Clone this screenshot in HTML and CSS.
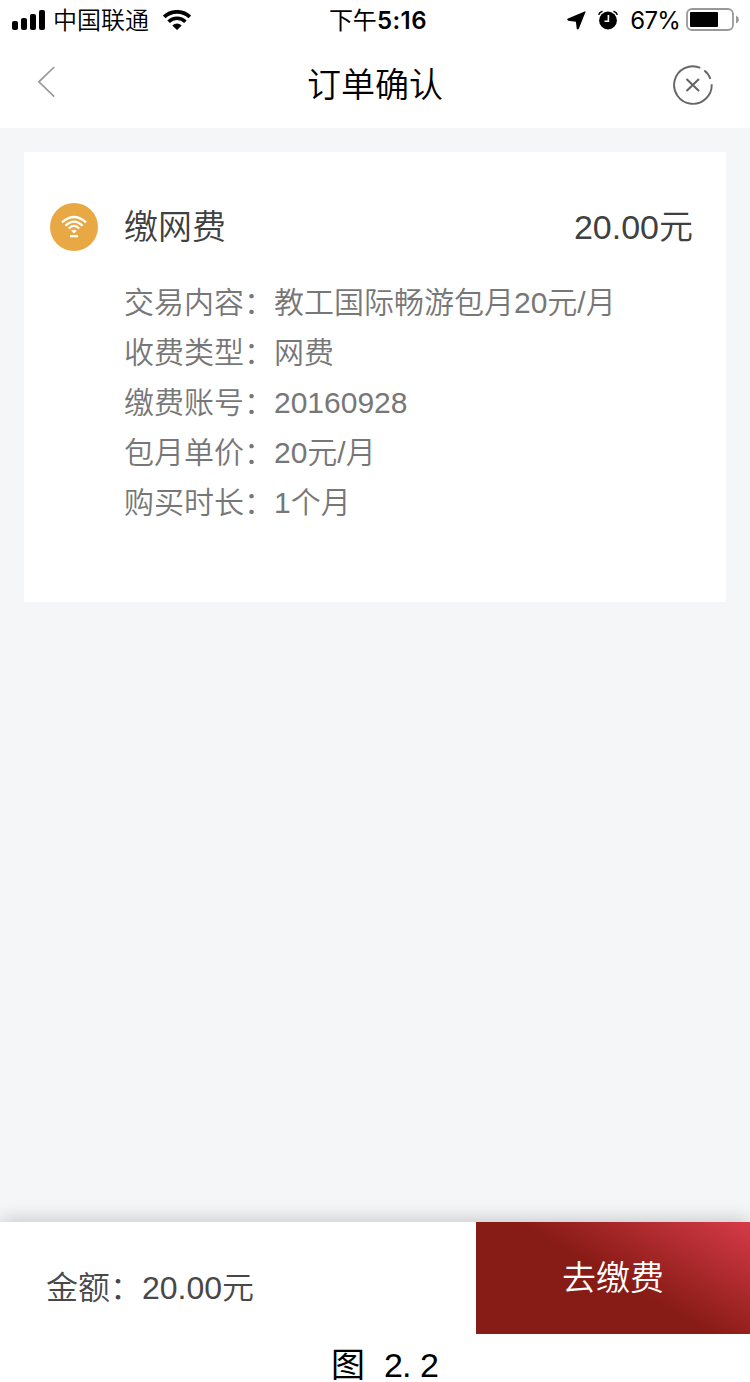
FILE: index.html
```html
<!DOCTYPE html>
<html lang="zh-CN">
<head>
<meta charset="UTF-8">
<meta name="viewport" content="width=device-width, initial-scale=1.0">
<title>订单确认</title>
<link rel="stylesheet" href="styles.css">
</head>
<body>

<div class="status-bar">
  <div class="status-left">
    <svg class="signal" width="34" height="20" viewBox="0 0 34 20">
      <rect x="0" y="11" width="6" height="9" rx="2"/>
      <rect x="9" y="8" width="6" height="12" rx="2"/>
      <rect x="18" y="4" width="6" height="16" rx="2"/>
      <rect x="27" y="0" width="6" height="20" rx="2"/>
    </svg>
    <span class="carrier">中国联通</span>
    <svg class="wifi" width="28" height="20" viewBox="0 0 28 20">
      <path d="M1.2 7A18.5 18.5 0 0 1 26.8 7" fill="none" stroke="#000" stroke-width="3.8"/>
      <path d="M5.6 11.8A11.8 11.8 0 0 1 22.4 11.8" fill="none" stroke="#000" stroke-width="3.5"/>
      <path d="M9.3 15.5Q14 11.7 18.7 15.5L14 19.9z"/>
    </svg>
  </div>
  <div class="time">下午<b>5:16</b></div>
  <div class="status-right">
    <svg class="location" width="19" height="19" viewBox="0 0 19 19">
      <path d="M17.6.4Q19 0 18.3 1.4L11.9 17.4Q10.4 19.6 9.7 17.4L8.9 10.8 1.3 9.7Q-.8 8.7 1 7.4z"/>
    </svg>
    <svg class="alarm" width="20" height="20" viewBox="0 0 20 20">
      <circle cx="10" cy="10.5" r="8.9"/>
      <path d="M.7 4.7Q1.5 2 4.5 1.2M19.3 4.7Q18.5 2 15.5 1.2" fill="none" stroke="#000" stroke-width="1.6"/>
      <path d="M10.4 5v6.2H6.5" fill="none" stroke="#fff" stroke-width="1.6"/>
    </svg>
    <span class="percent">67%</span>
    <svg class="battery" width="54" height="24" viewBox="0 0 54 24">
      <rect x="1" y="1" width="46" height="21" rx="5" fill="none" stroke="#999" stroke-width="1.8"/>
      <rect x="4" y="4" width="28" height="15" rx="1"/>
      <path d="M50 7.5Q53 8.8 53 11.5T50 15.5z" fill="#999"/>
    </svg>
  </div>
</div>

<header>
  <svg class="back" width="20" height="32" viewBox="0 0 20 32">
    <path d="M18.2 1L2.9 15.8 18.2 30.6" fill="none" stroke="#999" stroke-width="1.7"/>
  </svg>
  <h1>订单确认</h1>
  <svg class="close" width="42" height="42" viewBox="0 0 42 42">
    <path d="M28.3 3.8A18.8 18.8 0 1 0 39.7 20.3" fill="none" stroke="#666" stroke-width="1.9"/>
    <path d="M32.3 6.4Q36.7 9.7 38.4 15" fill="none" stroke="#666" stroke-width="1.9"/>
    <path d="M14.5 15L27 27M27 15L14.5 27" fill="none" stroke="#666" stroke-width="2.1"/>
  </svg>
</header>

<main>
  <section class="card">
    <div class="card-head">
      <svg class="fee-icon" width="48" height="48" viewBox="0 0 48 48">
        <circle cx="24" cy="24" r="24" fill="#e8a945"/>
        <g fill="none" stroke="#fff" stroke-width="2.2">
          <path d="M12 19.4Q24 8.6 36 19.4"/>
          <path d="M15.4 22.7Q24 14.4 32.6 22.7"/>
          <path d="M18.8 25.6Q24 20.2 29.2 25.6"/>
          <path d="M20 33.2h8"/>
        </g>
        <path d="M21.2 27.7Q24 25.6 26.8 27.7L24 30.5z" fill="#fff"/>
      </svg>
      <h2>缴网费</h2>
      <span class="price">20.00元</span>
    </div>
    <ul class="detail">
      <li>交易内容：教工国际畅游包月20元/月</li>
      <li>收费类型：网费</li>
      <li>缴费账号：20160928</li>
      <li>包月单价：20元/月</li>
      <li>购买时长：1个月</li>
    </ul>
  </section>
</main>

<footer>
  <div class="total">金额：20.00元</div>
  <button class="pay" type="button">去缴费</button>
</footer>

<div class="caption"><span>图</span><i></i><i>2</i><i class="dot">.</i><i>2</i></div>

</body>
</html>
```
FILE: styles.css
```css
* { box-sizing: border-box; }
body {
  margin: 0;
  height: 1382px;
  display: flex;
  flex-direction: column;
  font-family: "Liberation Sans", "Noto Sans CJK SC", sans-serif;
  font-weight: 350;
  background: #fff;
  color: #000;
}
svg { display: block; flex: none; }

/* Status bar */
.status-bar {
  height: 40px;
  display: grid;
  grid-template-columns: 1fr auto 1fr;
  align-items: center;
  padding: 0 10px 0 12px;
  font-family: Inter, "Noto Sans CJK SC", sans-serif;
  font-size: 24px;
  line-height: 38px;
}
.status-left, .status-right { display: flex; align-items: center; }
.status-right { justify-content: flex-end; }
.carrier { margin: 0 14px 0 7px; padding-top: 2px; }
.time { font-weight: 400; padding: 2px 0 0 4px; }
.time b { font-weight: 600; letter-spacing: 0.5px; }
.alarm { margin: 0 12px; }
.percent { font-weight: 400; margin-right: 6px; padding-top: 2px; letter-spacing: -0.8px; }

/* Title bar */
header {
  height: 88px;
  display: flex;
  align-items: center;
  justify-content: space-between;
  padding: 0 36px;
}
header h1 { margin: 0; padding-top: 2px; font-size: 34px; font-weight: 350; line-height: 86px; }
.back { margin: 0 22px 5px 0; }
.close { margin-top: 2px; }

/* Order card */
main { height: 1094px; padding: 24px; background: #f4f6f8; }
.card { height: 450px; padding: 50px 33px 0 26px; background: #fff; }
.card-head { height: 50px; display: flex; align-items: center; color: #404040; font-size: 34px; line-height: 50px; }
.card-head h2 { margin: 0 0 0 26px; font-size: 34px; font-weight: 350; }
.price { margin-left: auto; }
.detail { list-style: none; margin: 26px 0 0 74px; padding: 0; color: #777; font-size: 30px; line-height: 50px; }
.detail li { height: 50px; }

/* Pay bar */
footer { height: 112px; display: flex; background: #fff; box-shadow: 0 0 20px rgba(0,0,0,0.24); clip-path: inset(-30px 0 0 0); }
.total { flex: 1; padding: 10px 0 0 46px; font-size: 32px; line-height: 112px; color: #484848; }
.pay {
  width: 274px;
  padding: 0 0 6px;
  border: none;
  background: linear-gradient(30deg, #871b15 50%, #d63a48);
  color: #fff;
  font: inherit;
  font-size: 34px;
}

.caption {
  height: 48px;
  display: flex;
  padding: 14px 0 0 331px;
  font-size: 34px;
  font-weight: 400;
  line-height: 34px;
}
.caption span { width: 35px; }
.caption i { width: 18px; text-align: center; font-style: normal; }
.caption .dot { text-align: left; }
```
